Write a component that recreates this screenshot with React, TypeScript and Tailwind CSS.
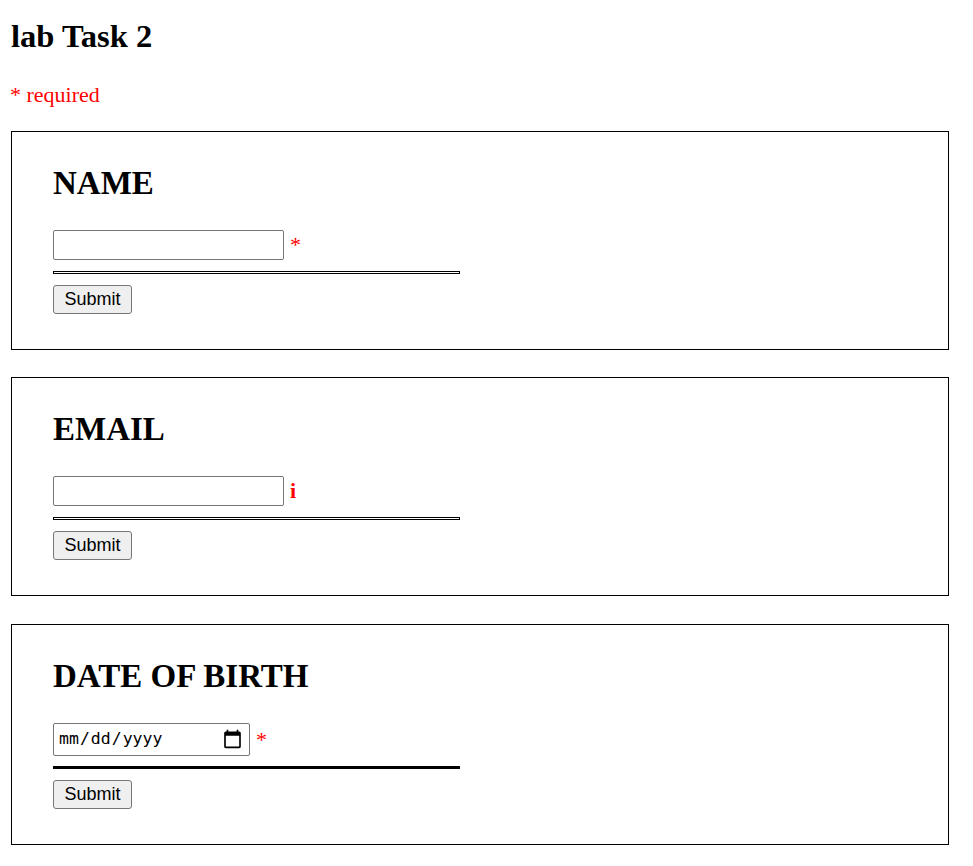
import React from "react";

function Box({
  title,
  kind,
  className,
}: {
  title: string;
  kind: "name" | "email" | "date";
  className?: string;
}) {
  return (
    <div
      className={
        "w-[938px] border border-black pl-[41px] pt-[33px] pb-[35px] " +
        (className ?? "")
      }
    >
      <h2 className="text-[33px] leading-[37px] font-bold text-black">{title}</h2>
      <div className="mt-[28px] flex items-start">
        {kind === "date" ? (
          <input
            type="date"
            className="w-[197px] h-[33px] border border-[#767676] rounded-[2px] bg-white pl-[4px] pr-[6px] text-[16.5px] text-black [font-family:'DejaVu_Sans_Mono','Liberation_Mono',monospace] [&::-webkit-calendar-picker-indicator]:w-[21px] [&::-webkit-calendar-picker-indicator]:h-[22px] [&::-webkit-calendar-picker-indicator]:p-0 [&::-webkit-calendar-picker-indicator]:m-0"
          />
        ) : (
          <input
            type="text"
            className="w-[231px] h-[30px] border border-[#767676] rounded-[2px] bg-white px-[2px] text-[18px] [font-family:'Liberation_Sans',Arial,sans-serif]"
          />
        )}
        {kind === "email" ? (
          <span className="ml-[6px] mt-[2px] text-[22px] leading-[25px] font-bold text-[#ff0000]">
            i
          </span>
        ) : (
          <span
            className={
              "ml-[6px] text-[22px] leading-[25px] text-[#ff0000] " +
              (kind === "date" ? "mt-[4px]" : "mt-[2px]")
            }
          >
            *
          </span>
        )}
      </div>
      {kind === "date" ? (
        <div className="mt-[10px] w-[407px] h-[3px] bg-black" />
      ) : (
        <div className="mt-[11px] w-[407px] h-[3px] border border-black bg-white" />
      )}
      <button
        type="button"
        className="mt-[11px] block w-[79px] h-[29px] border border-[#767676] rounded-[3px] bg-[#efefef] text-[18px] leading-[27px] text-black text-center [font-family:'Liberation_Sans',Arial,sans-serif]"
      >
        Submit
      </button>
    </div>
  );
}

export default function App() {
  return (
    <div className="min-h-[866px] bg-white pl-[11px] pt-[17px] pb-[20px] text-black [font-family:'Liberation_Serif','Times_New_Roman',serif]">
      <h1 className="text-[32.6px] leading-[38px] font-bold">lab Task 2</h1>
      <p className="mt-[27px] -ml-[1px] text-[22px] leading-[25px] text-[#ff0000]">* required</p>
      <div className="mt-[24px] flex flex-col">
        <Box title="NAME" kind="name" />
        <Box title="EMAIL" kind="email" className="mt-[27px]" />
        <Box title="DATE OF BIRTH" kind="date" className="mt-[28px]" />
      </div>
    </div>
  );
}
